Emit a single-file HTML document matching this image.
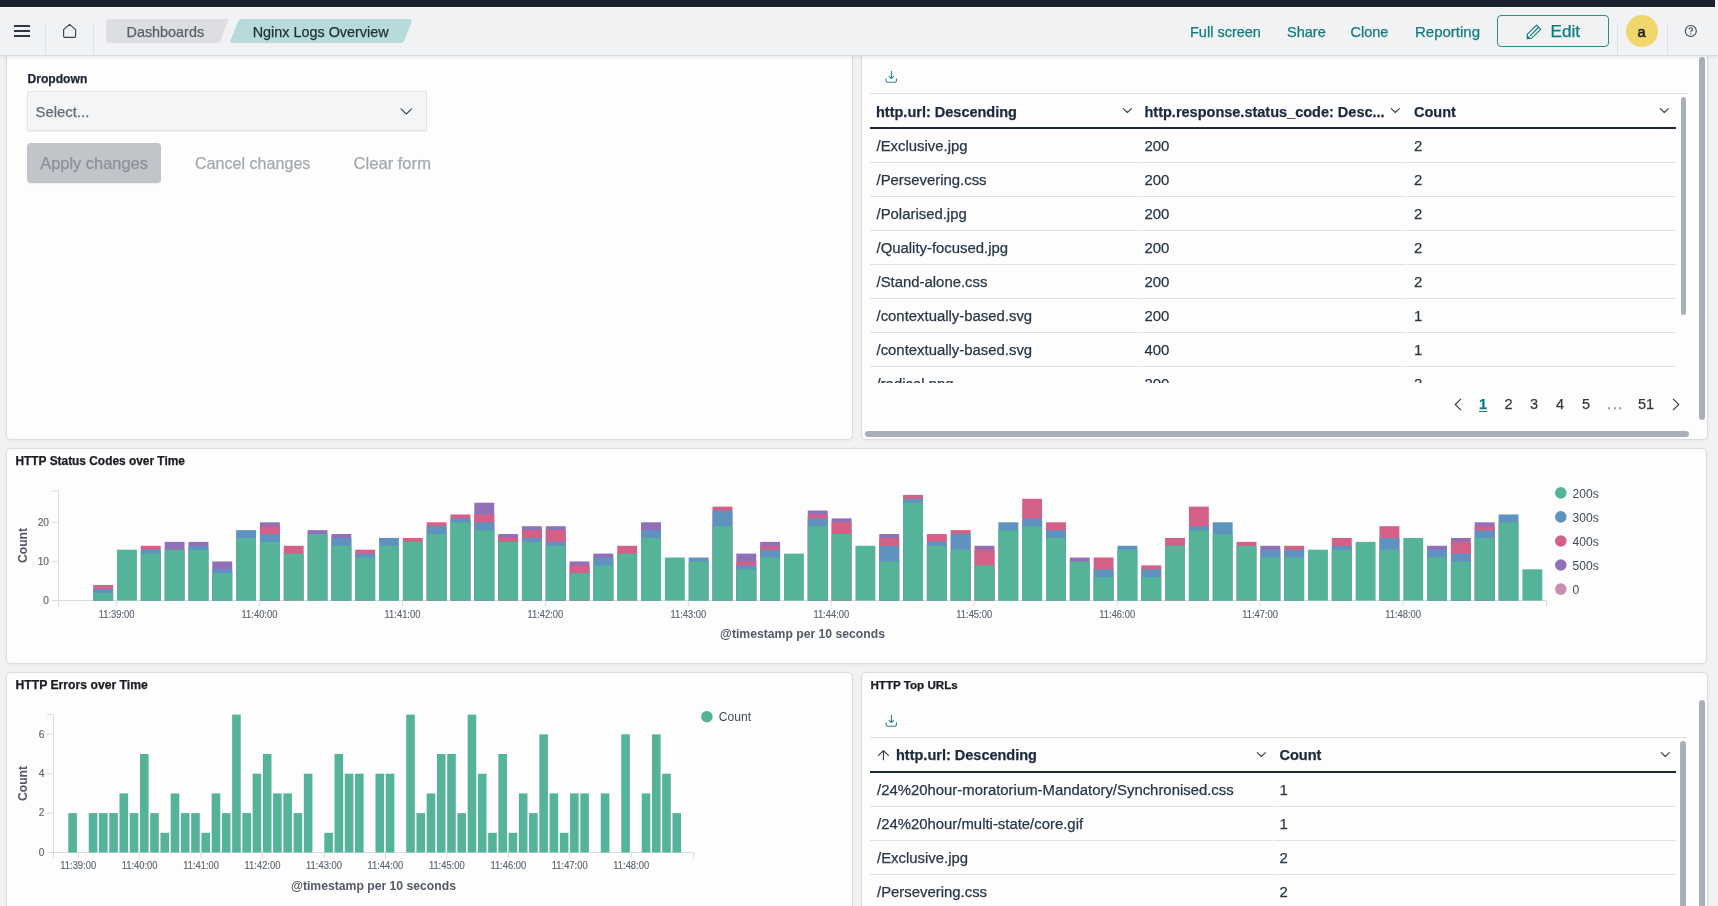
<!DOCTYPE html>
<html><head><meta charset="utf-8"><style>
html,body{-webkit-text-stroke:0.25px currentColor;margin:0;padding:0;will-change:transform;width:1718px;height:906px;overflow:hidden;background:#F1F2F4;font-family:"Liberation Sans", sans-serif;color:#343741}
.abs{position:absolute}
.panel{position:absolute;box-sizing:border-box;background:#FDFDFE;border:1px solid #DADDE2;border-radius:5px;box-shadow:0 1px 3px rgba(0,0,0,0.06)}
.hdr{position:absolute;left:0;top:7px;width:1718px;height:49px;box-sizing:border-box;background:#F1F2F4;border-bottom:1px solid #D8DBDF;box-shadow:inset 0 1px 0 #F8F9FA,0 1px 4px rgba(0,0,0,0.09);z-index:5}
.top{position:absolute;left:0;top:0;width:1714.5px;height:7px;background:#1B2331;z-index:6}
.sep{position:absolute;top:23px;width:1px;height:32px;background:#DCDFE3}
.menu{position:absolute;top:22px;font-size:14.5px;color:#0F7C7C;white-space:nowrap;line-height:18px}
.bc{position:absolute;top:19px;height:24px;line-height:24px;font-size:14.4px;white-space:nowrap}
.th{position:absolute;font-size:14.5px;font-weight:700;color:#1D2A3E;white-space:nowrap;line-height:20px}
.td{position:absolute;font-size:14.9px;color:#2A3746;white-space:nowrap;line-height:20px}
.chev{position:absolute;line-height:0}
.hline{position:absolute;height:1px;background:#DDE1E6}
.rl{position:absolute;left:0;width:806px;height:1px;background:#DDE1E6}
.sb{position:absolute;background:#A9AFB8;border-radius:3px}
.pgn{position:absolute;top:394.5px;font-size:14.5px;line-height:18px;color:#343741}
.ptitle{position:absolute;font-size:11.9px;font-weight:700;color:#1A1C21;white-space:nowrap;line-height:16px}
svg text{font-family:"Liberation Sans", sans-serif;-webkit-text-stroke:0}
.tk{font-size:10.2px;fill:#5C6573;stroke:#5C6573;stroke-width:0.15px}
.at{font-size:12.2px;font-weight:700;fill:#535966}
.lg{font-size:12.1px;fill:#3F4A59}
</style></head><body>
<div class="top"></div>
<div class="hdr">
  <svg style="position:absolute;left:14px;top:18px" width="17" height="13" viewBox="0 0 17 13"><path d="M0 1 H16 M0 6 H16 M0 11 H16" stroke="#343741" stroke-width="1.9"/></svg>
  <div class="sep" style="left:45px;top:16px"></div>
  <svg style="position:absolute;left:62px;top:16px" width="16" height="16" viewBox="0 0 16 16"><path d="M1.6 13.3 V6.6 L7.6 1.4 L13.6 6.6 V13.3 Q13.6 14.3 12.6 14.3 H2.6 Q1.6 14.3 1.6 13.3 Z" fill="none" stroke="#3A4351" stroke-width="1.15" stroke-linejoin="round"/></svg>
  <div class="sep" style="left:93px;top:16px"></div>
  <svg style="position:absolute;left:105px;top:12px" width="310" height="24" viewBox="0 0 310 24">
    <path d="M5 0 H122 Q124 0 123 2 L115.5 21.5 Q114.5 24 112 24 H5 Q1 24 1 20 V4 Q1 0 5 0Z" fill="#DCDEE2"/>
    <path d="M134 0 H304 Q307.5 0 306.5 3 L299.5 21 Q298.5 24 295.5 24 H127 Q124.5 24 125.5 21.5 L133 2.5 Q134 0 136 0Z" fill="#B6DBDA"/>
  </svg>
  <div class="bc" style="left:126.5px;top:13px;color:#5A616B">Dashboards</div>
  <div class="bc" style="left:252.7px;top:13px;color:#23303F">Nginx Logs Overview</div>
  <div class="menu" style="left:1190px;top:15.5px">Full screen</div>
  <div class="menu" style="left:1287px;top:15.5px">Share</div>
  <div class="menu" style="left:1350.5px;top:15.5px">Clone</div>
  <div class="menu" style="left:1415px;top:15.5px;font-size:15px">Reporting</div>
  <div style="position:absolute;left:1497px;top:8px;width:110px;height:30px;border:1px solid #2A8C8A;border-radius:4px"></div>
  <svg style="position:absolute;left:1526px;top:16.6px" width="17" height="17" viewBox="0 0 17 17"><path d="M5.6 14.2 L1.3 14.6 L1.2 10.3 L10.6 1.1 L14.8 5.3 Z M4.4 11.6 L12.4 3.5" fill="none" stroke="#0F7C7C" stroke-width="1.15" stroke-linejoin="round" stroke-linecap="round"/><path d="M1.2 11.2 L1.3 14.6 L4.6 14.3Z" fill="#0F7C7C"/></svg>
  <div class="menu" style="left:1550.5px;top:13px;font-size:17.2px;line-height:22px">Edit</div>
  <div class="sep" style="left:1617px;top:16px"></div>
  <div style="position:absolute;left:1625.5px;top:8px;width:32px;height:32px;border-radius:16px;background:#F0D66B;text-align:center;line-height:34px;font-size:14.5px;-webkit-text-stroke:0.55px #1A1C21;color:#1A1C21">a</div>
  <div class="sep" style="left:1667px;top:16px"></div>
  <svg style="position:absolute;left:1684px;top:17px" width="14" height="14" viewBox="0 0 14 14"><circle cx="6.8" cy="7" r="5.5" fill="none" stroke="#3A4452" stroke-width="1.1"/><path d="M5.1 5.5 Q5.1 3.8 6.8 3.8 Q8.6 3.8 8.6 5.3 Q8.6 6.3 7.5 6.8 Q6.8 7.1 6.8 8.2" fill="none" stroke="#3A4452" stroke-width="1.05"/><circle cx="6.8" cy="9.9" r="0.65" fill="#3A4452"/></svg>
</div>

<!-- Panel A -->
<div class="panel" style="left:6px;top:20px;width:847px;height:420px"></div>
<div class="abs" style="left:27.5px;top:71.3px;font-size:12.1px;font-weight:700;color:#1D2433;line-height:16px">Dropdown</div>
<div class="abs" style="left:27px;top:91px;width:398px;height:38px;background:#F4F5F7;border:1px solid #E1E4E8;border-radius:1px;box-shadow:0 1px 1px rgba(0,0,0,0.05)"></div>
<div class="abs" style="left:35.5px;top:101.7px;font-size:14.9px;color:#646B76;line-height:20px">Select...</div>
<svg style="position:absolute;left:400px;top:107.5px" width="13" height="8" viewBox="0 0 13 8"><path d="M1 0.8 L6.3 6 L11.6 0.8" fill="none" stroke="#3A4452" stroke-width="1.1" stroke-linecap="round" stroke-linejoin="round"/></svg>
<div class="abs" style="left:27px;top:143px;width:134px;height:40px;background:#C1C4C9;border-radius:4px;box-shadow:0 1px 1px rgba(0,0,0,0.05)"></div>
<div class="abs" style="left:40.3px;top:152px;font-size:16.4px;color:#8B9199;line-height:22px">Apply changes</div>
<div class="abs" style="left:195px;top:152px;font-size:16.1px;color:#A3A9B1;line-height:22px">Cancel changes</div>
<div class="abs" style="left:353.5px;top:152.5px;font-size:16.6px;color:#A3A9B1;line-height:22px">Clear form</div>

<!-- Panel B -->
<div class="panel" style="left:861px;top:20px;width:847px;height:420px"></div>
<div class="hline" style="left:870px;top:93px;width:818px"></div>
<div class="th" style="left:876px;top:101.5px">http.url: Descending</div>
<div class="chev" style="left:1121.5px;top:108px"><svg width="11" height="6" viewBox="0 0 11 6"><path d="M1.3 0.6 L5.3 4.5 L9.4 0.6" fill="none" stroke="#3A4452" stroke-width="1.15" stroke-linecap="round" stroke-linejoin="round"/></svg></div>
<div class="th" style="left:1144.5px;top:101.5px">http.response.status_code: Desc...</div>
<div class="chev" style="left:1390px;top:108px"><svg width="11" height="6" viewBox="0 0 11 6"><path d="M1.3 0.6 L5.3 4.5 L9.4 0.6" fill="none" stroke="#3A4452" stroke-width="1.15" stroke-linecap="round" stroke-linejoin="round"/></svg></div>
<div class="th" style="left:1414px;top:101.5px">Count</div>
<div class="chev" style="left:1659px;top:108px"><svg width="11" height="6" viewBox="0 0 11 6"><path d="M1.3 0.6 L5.3 4.5 L9.4 0.6" fill="none" stroke="#3A4452" stroke-width="1.15" stroke-linecap="round" stroke-linejoin="round"/></svg></div>
<div style="position:absolute;left:870px;top:127px;width:806px;height:2px;background:#1D2A3E"></div>
<div style="position:absolute;left:870px;top:129px;width:806px;height:254px;overflow:hidden">
<div class="td" style="left:6.5px;top:7.3px">/Exclusive.jpg</div><div class="td" style="left:274.5px;top:7.3px">200</div><div class="td" style="left:544px;top:7.3px">2</div>
<div class="rl" style="top:33px"></div>
<div class="td" style="left:6.5px;top:41.3px">/Persevering.css</div><div class="td" style="left:274.5px;top:41.3px">200</div><div class="td" style="left:544px;top:41.3px">2</div>
<div class="rl" style="top:67px"></div>
<div class="td" style="left:6.5px;top:75.3px">/Polarised.jpg</div><div class="td" style="left:274.5px;top:75.3px">200</div><div class="td" style="left:544px;top:75.3px">2</div>
<div class="rl" style="top:101px"></div>
<div class="td" style="left:6.5px;top:109.3px">/Quality-focused.jpg</div><div class="td" style="left:274.5px;top:109.3px">200</div><div class="td" style="left:544px;top:109.3px">2</div>
<div class="rl" style="top:135px"></div>
<div class="td" style="left:6.5px;top:143.3px">/Stand-alone.css</div><div class="td" style="left:274.5px;top:143.3px">200</div><div class="td" style="left:544px;top:143.3px">2</div>
<div class="rl" style="top:169px"></div>
<div class="td" style="left:6.5px;top:177.3px">/contextually-based.svg</div><div class="td" style="left:274.5px;top:177.3px">200</div><div class="td" style="left:544px;top:177.3px">1</div>
<div class="rl" style="top:203px"></div>
<div class="td" style="left:6.5px;top:211.3px">/contextually-based.svg</div><div class="td" style="left:274.5px;top:211.3px">400</div><div class="td" style="left:544px;top:211.3px">1</div>
<div class="rl" style="top:237px"></div>
<div class="td" style="left:6.5px;top:245.3px">/radical.png</div><div class="td" style="left:274.5px;top:245.3px">200</div><div class="td" style="left:544px;top:245.3px">2</div>
<div class="rl" style="top:271px"></div>
<div style="position:absolute;left:268px;top:0;width:1px;height:254px;background:#FDFDFE"></div><div style="position:absolute;left:537px;top:0;width:1px;height:254px;background:#FDFDFE"></div>
</div>
<div style="position:absolute;left:1454px;top:397px"><svg width="8" height="13" viewBox="0 0 8 13"><path d="M7 0.8 L1.2 6.5 L7 12.2" fill="none" stroke="#343741" stroke-width="1.1"/></svg></div>
<div class="pgn" style="left:1479px;color:#0F7C7C;font-weight:700;text-decoration:underline;text-underline-offset:2px">1</div>
<div class="pgn" style="left:1504.5px">2</div>
<div class="pgn" style="left:1530px">3</div>
<div class="pgn" style="left:1556px">4</div>
<div class="pgn" style="left:1582px">5</div>
<div class="pgn" style="left:1638px">51</div>
<div class="pgn" style="left:1607px;color:#7D848F;letter-spacing:1.6px">...</div>
<div style="position:absolute;left:1672px;top:397px"><svg width="8" height="13" viewBox="0 0 8 13"><path d="M1 0.8 L6.8 6.5 L1 12.2" fill="none" stroke="#343741" stroke-width="1.1"/></svg></div>
<div class="sb" style="left:865px;top:431px;width:823.5px;height:6px"></div>
<div class="sb" style="left:1680.5px;top:97px;width:5.5px;height:218px"></div>
<div class="sb" style="left:1699px;top:57px;width:6px;height:363px"></div>
<div style="position:absolute;left:885px;top:69px"><svg width="13" height="13" viewBox="0 0 13 13"><path d="M6.4 1.2 V8.4 M4.1 6.4 L6.4 8.5 L8.6 6.4 M1.1 8.9 V10.5 Q1.1 12.2 2.8 12.2 H9.8 Q11.5 12.2 11.5 10.5 V8.9" fill="none" stroke="#2A8987" stroke-width="1.1" stroke-linecap="round" stroke-linejoin="round"/></svg></div>

<!-- Panel C -->
<div class="panel" style="left:6px;top:448px;width:1701px;height:216px"></div>
<div class="ptitle" style="left:15.5px;top:453px">HTTP Status Codes over Time</div>

<!-- Panel D -->
<div class="panel" style="left:6px;top:672px;width:847px;height:260px"></div>
<div class="ptitle" style="left:15.5px;top:677px;font-size:12.2px">HTTP Errors over Time</div>

<!-- Panel E -->
<div class="panel" style="left:861px;top:672px;width:847px;height:260px"></div>
<div class="ptitle" style="left:870.5px;top:677px;font-size:11.6px">HTTP Top URLs</div>
<div style="position:absolute;left:885px;top:713px"><svg width="13" height="13" viewBox="0 0 13 13"><path d="M6.4 1.2 V8.4 M4.1 6.4 L6.4 8.5 L8.6 6.4 M1.1 8.9 V10.5 Q1.1 12.2 2.8 12.2 H9.8 Q11.5 12.2 11.5 10.5 V8.9" fill="none" stroke="#2A8987" stroke-width="1.1" stroke-linecap="round" stroke-linejoin="round"/></svg></div>
<div class="hline" style="left:870px;top:737px;width:817px"></div>
<div style="position:absolute;left:878px;top:747px"><svg width="11" height="13" viewBox="0 0 11 13"><path d="M5.45 11.7 V3 M0.6 7.4 L5.45 2.7 L10.4 7.4" fill="none" stroke="#2F3A48" stroke-width="1.15" stroke-linecap="round" stroke-linejoin="round"/></svg></div>
<div class="th" style="left:896px;top:745px">http.url: Descending</div>
<div class="chev" style="left:1256px;top:752px"><svg width="11" height="6" viewBox="0 0 11 6"><path d="M1.3 0.6 L5.3 4.5 L9.4 0.6" fill="none" stroke="#3A4452" stroke-width="1.15" stroke-linecap="round" stroke-linejoin="round"/></svg></div>
<div class="th" style="left:1279.5px;top:745px">Count</div>
<div class="chev" style="left:1659.5px;top:752px"><svg width="11" height="6" viewBox="0 0 11 6"><path d="M1.3 0.6 L5.3 4.5 L9.4 0.6" fill="none" stroke="#3A4452" stroke-width="1.15" stroke-linecap="round" stroke-linejoin="round"/></svg></div>
<div style="position:absolute;left:870px;top:770.5px;width:806px;height:2px;background:#1D2A3E"></div>
<div class="td" style="left:877px;top:779.5px">/24%20hour-moratorium-Mandatory/Synchronised.css</div><div class="td" style="left:1279.5px;top:779.5px">1</div>
<div class="hline" style="left:870px;top:806.0px;width:806px"></div>
<div class="td" style="left:877px;top:813.5px">/24%20hour/multi-state/core.gif</div><div class="td" style="left:1279.5px;top:813.5px">1</div>
<div class="hline" style="left:870px;top:840.0px;width:806px"></div>
<div class="td" style="left:877px;top:847.5px">/Exclusive.jpg</div><div class="td" style="left:1279.5px;top:847.5px">2</div>
<div class="hline" style="left:870px;top:874.0px;width:806px"></div>
<div class="td" style="left:877px;top:881.5px">/Persevering.css</div><div class="td" style="left:1279.5px;top:881.5px">2</div>
<div class="hline" style="left:870px;top:908.0px;width:806px"></div>
<div class="td" style="left:877px;top:915.5px">/Polarised.jpg</div><div class="td" style="left:1279.5px;top:915.5px">2</div>
<div class="hline" style="left:870px;top:942.0px;width:806px"></div>
<div style="position:absolute;left:1272px;top:773px;width:1px;height:140px;background:#FDFDFE"></div>
<div class="sb" style="left:1680px;top:741px;width:6px;height:200px"></div>
<div class="sb" style="left:1699px;top:700px;width:5.5px;height:220px"></div>

<svg style="position:absolute;left:0;top:0" width="1718" height="906">
<rect x="58" y="490.5" width="1" height="116" fill="#D9DCE1"/>
<rect x="52" y="600" width="1495" height="1" fill="#D9DCE1"/>
<rect x="52" y="600.1" width="6" height="1" fill="#D9DCE1"/>
<text x="49" y="603.9" text-anchor="end" class="tk">0</text>
<rect x="52" y="561.0" width="6" height="1" fill="#D9DCE1"/>
<text x="49" y="564.8" text-anchor="end" class="tk">10</text>
<rect x="52" y="521.8" width="6" height="1" fill="#D9DCE1"/>
<text x="49" y="525.6" text-anchor="end" class="tk">20</text>
<rect x="52" y="490.5" width="6" height="1" fill="#D9DCE1"/>
<rect x="116.1" y="600" width="1" height="6.5" fill="#D9DCE1"/>
<text x="98.7" y="617.5" class="tk" textLength="35.8" lengthAdjust="spacingAndGlyphs">11:39:00</text>
<rect x="259.0" y="600" width="1" height="6.5" fill="#D9DCE1"/>
<text x="241.6" y="617.5" class="tk" textLength="35.8" lengthAdjust="spacingAndGlyphs">11:40:00</text>
<rect x="402.0" y="600" width="1" height="6.5" fill="#D9DCE1"/>
<text x="384.6" y="617.5" class="tk" textLength="35.8" lengthAdjust="spacingAndGlyphs">11:41:00</text>
<rect x="544.9" y="600" width="1" height="6.5" fill="#D9DCE1"/>
<text x="527.5" y="617.5" class="tk" textLength="35.8" lengthAdjust="spacingAndGlyphs">11:42:00</text>
<rect x="687.9" y="600" width="1" height="6.5" fill="#D9DCE1"/>
<text x="670.5" y="617.5" class="tk" textLength="35.8" lengthAdjust="spacingAndGlyphs">11:43:00</text>
<rect x="830.8" y="600" width="1" height="6.5" fill="#D9DCE1"/>
<text x="813.4" y="617.5" class="tk" textLength="35.8" lengthAdjust="spacingAndGlyphs">11:44:00</text>
<rect x="973.7" y="600" width="1" height="6.5" fill="#D9DCE1"/>
<text x="956.3" y="617.5" class="tk" textLength="35.8" lengthAdjust="spacingAndGlyphs">11:45:00</text>
<rect x="1116.7" y="600" width="1" height="6.5" fill="#D9DCE1"/>
<text x="1099.3" y="617.5" class="tk" textLength="35.8" lengthAdjust="spacingAndGlyphs">11:46:00</text>
<rect x="1259.6" y="600" width="1" height="6.5" fill="#D9DCE1"/>
<text x="1242.2" y="617.5" class="tk" textLength="35.8" lengthAdjust="spacingAndGlyphs">11:47:00</text>
<rect x="1402.6" y="600" width="1" height="6.5" fill="#D9DCE1"/>
<text x="1385.2" y="617.5" class="tk" textLength="35.8" lengthAdjust="spacingAndGlyphs">11:48:00</text>
<rect x="1546" y="600" width="1" height="6.5" fill="#D9DCE1"/>
<text transform="translate(26.5,545.5) rotate(-90)" text-anchor="middle" class="at">Count</text>
<text x="802.5" y="637.7" text-anchor="middle" class="at">@timestamp per 10 seconds</text>
<circle cx="1560.8" cy="492.9" r="5.8" fill="#54B399"/>
<text x="1572.5" y="497.7" class="lg">200s</text>
<circle cx="1560.8" cy="516.9" r="5.8" fill="#6092C0"/>
<text x="1572.5" y="521.7" class="lg">300s</text>
<circle cx="1560.8" cy="541.0" r="5.8" fill="#D36086"/>
<text x="1572.5" y="545.8" class="lg">400s</text>
<circle cx="1560.8" cy="565.0" r="5.8" fill="#9170B8"/>
<text x="1572.5" y="569.8" class="lg">500s</text>
<circle cx="1560.8" cy="589.1" r="5.8" fill="#CA8EAE"/>
<text x="1572.5" y="593.9" class="lg">0</text>
<rect x="93.20" y="584.94" width="19.9" height="15.66" fill="#D36086"/>
<rect x="93.20" y="588.86" width="19.9" height="11.75" fill="#6092C0"/>
<rect x="93.20" y="592.77" width="19.9" height="7.83" fill="#54B399"/>
<rect x="117.02" y="549.71" width="19.9" height="50.90" fill="#54B399"/>
<rect x="140.84" y="545.79" width="19.9" height="54.81" fill="#D36086"/>
<rect x="140.84" y="549.71" width="19.9" height="50.90" fill="#6092C0"/>
<rect x="140.84" y="553.62" width="19.9" height="46.98" fill="#54B399"/>
<rect x="164.66" y="541.88" width="19.9" height="58.73" fill="#9170B8"/>
<rect x="164.66" y="549.71" width="19.9" height="50.90" fill="#54B399"/>
<rect x="188.48" y="541.88" width="19.9" height="58.73" fill="#9170B8"/>
<rect x="188.48" y="545.79" width="19.9" height="54.81" fill="#6092C0"/>
<rect x="188.48" y="549.71" width="19.9" height="50.90" fill="#54B399"/>
<rect x="212.30" y="561.45" width="19.9" height="39.15" fill="#9170B8"/>
<rect x="212.30" y="569.28" width="19.9" height="31.32" fill="#6092C0"/>
<rect x="212.30" y="573.20" width="19.9" height="27.41" fill="#54B399"/>
<rect x="236.12" y="530.13" width="19.9" height="70.47" fill="#6092C0"/>
<rect x="236.12" y="537.96" width="19.9" height="62.64" fill="#54B399"/>
<rect x="259.94" y="522.30" width="19.9" height="78.30" fill="#9170B8"/>
<rect x="259.94" y="526.22" width="19.9" height="74.39" fill="#D36086"/>
<rect x="259.94" y="534.05" width="19.9" height="66.56" fill="#6092C0"/>
<rect x="259.94" y="541.88" width="19.9" height="58.73" fill="#54B399"/>
<rect x="283.76" y="545.79" width="19.9" height="54.81" fill="#D36086"/>
<rect x="283.76" y="553.62" width="19.9" height="46.98" fill="#54B399"/>
<rect x="307.58" y="530.13" width="19.9" height="70.47" fill="#9170B8"/>
<rect x="307.58" y="534.05" width="19.9" height="66.56" fill="#54B399"/>
<rect x="331.40" y="534.05" width="19.9" height="66.56" fill="#9170B8"/>
<rect x="331.40" y="537.96" width="19.9" height="62.64" fill="#6092C0"/>
<rect x="331.40" y="545.79" width="19.9" height="54.81" fill="#54B399"/>
<rect x="355.22" y="549.71" width="19.9" height="50.90" fill="#D36086"/>
<rect x="355.22" y="553.62" width="19.9" height="46.98" fill="#6092C0"/>
<rect x="355.22" y="557.54" width="19.9" height="43.06" fill="#54B399"/>
<rect x="379.04" y="537.96" width="19.9" height="62.64" fill="#6092C0"/>
<rect x="379.04" y="545.79" width="19.9" height="54.81" fill="#54B399"/>
<rect x="402.86" y="537.96" width="19.9" height="62.64" fill="#D36086"/>
<rect x="402.86" y="541.88" width="19.9" height="58.73" fill="#54B399"/>
<rect x="426.68" y="522.30" width="19.9" height="78.30" fill="#D36086"/>
<rect x="426.68" y="526.22" width="19.9" height="74.39" fill="#6092C0"/>
<rect x="426.68" y="534.05" width="19.9" height="66.56" fill="#54B399"/>
<rect x="450.50" y="514.47" width="19.9" height="86.13" fill="#D36086"/>
<rect x="450.50" y="518.38" width="19.9" height="82.22" fill="#6092C0"/>
<rect x="450.50" y="522.30" width="19.9" height="78.30" fill="#54B399"/>
<rect x="474.32" y="502.73" width="19.9" height="97.88" fill="#9170B8"/>
<rect x="474.32" y="514.47" width="19.9" height="86.13" fill="#D36086"/>
<rect x="474.32" y="522.30" width="19.9" height="78.30" fill="#6092C0"/>
<rect x="474.32" y="530.13" width="19.9" height="70.47" fill="#54B399"/>
<rect x="498.14" y="534.05" width="19.9" height="66.56" fill="#9170B8"/>
<rect x="498.14" y="537.96" width="19.9" height="62.64" fill="#D36086"/>
<rect x="498.14" y="541.88" width="19.9" height="58.73" fill="#54B399"/>
<rect x="521.96" y="526.22" width="19.9" height="74.39" fill="#9170B8"/>
<rect x="521.96" y="530.13" width="19.9" height="70.47" fill="#D36086"/>
<rect x="521.96" y="537.96" width="19.9" height="62.64" fill="#6092C0"/>
<rect x="521.96" y="541.88" width="19.9" height="58.73" fill="#54B399"/>
<rect x="545.78" y="526.22" width="19.9" height="74.39" fill="#9170B8"/>
<rect x="545.78" y="530.13" width="19.9" height="70.47" fill="#D36086"/>
<rect x="545.78" y="541.88" width="19.9" height="58.73" fill="#6092C0"/>
<rect x="545.78" y="545.79" width="19.9" height="54.81" fill="#54B399"/>
<rect x="569.60" y="561.45" width="19.9" height="39.15" fill="#9170B8"/>
<rect x="569.60" y="565.37" width="19.9" height="35.23" fill="#D36086"/>
<rect x="569.60" y="573.20" width="19.9" height="27.41" fill="#54B399"/>
<rect x="593.42" y="553.62" width="19.9" height="46.98" fill="#9170B8"/>
<rect x="593.42" y="557.54" width="19.9" height="43.06" fill="#6092C0"/>
<rect x="593.42" y="565.37" width="19.9" height="35.23" fill="#54B399"/>
<rect x="617.24" y="545.79" width="19.9" height="54.81" fill="#D36086"/>
<rect x="617.24" y="553.62" width="19.9" height="46.98" fill="#54B399"/>
<rect x="641.06" y="522.30" width="19.9" height="78.30" fill="#9170B8"/>
<rect x="641.06" y="530.13" width="19.9" height="70.47" fill="#6092C0"/>
<rect x="641.06" y="537.96" width="19.9" height="62.64" fill="#54B399"/>
<rect x="664.88" y="557.54" width="19.9" height="43.06" fill="#54B399"/>
<rect x="688.70" y="557.54" width="19.9" height="43.06" fill="#6092C0"/>
<rect x="688.70" y="561.45" width="19.9" height="39.15" fill="#54B399"/>
<rect x="712.52" y="506.64" width="19.9" height="93.96" fill="#D36086"/>
<rect x="712.52" y="510.56" width="19.9" height="90.05" fill="#6092C0"/>
<rect x="712.52" y="526.22" width="19.9" height="74.39" fill="#54B399"/>
<rect x="736.34" y="553.62" width="19.9" height="46.98" fill="#9170B8"/>
<rect x="736.34" y="561.45" width="19.9" height="39.15" fill="#D36086"/>
<rect x="736.34" y="565.37" width="19.9" height="35.23" fill="#6092C0"/>
<rect x="736.34" y="569.28" width="19.9" height="31.32" fill="#54B399"/>
<rect x="760.16" y="541.88" width="19.9" height="58.73" fill="#9170B8"/>
<rect x="760.16" y="545.79" width="19.9" height="54.81" fill="#D36086"/>
<rect x="760.16" y="549.71" width="19.9" height="50.90" fill="#6092C0"/>
<rect x="760.16" y="557.54" width="19.9" height="43.06" fill="#54B399"/>
<rect x="783.98" y="553.62" width="19.9" height="46.98" fill="#54B399"/>
<rect x="807.80" y="510.56" width="19.9" height="90.05" fill="#9170B8"/>
<rect x="807.80" y="514.47" width="19.9" height="86.13" fill="#D36086"/>
<rect x="807.80" y="518.38" width="19.9" height="82.22" fill="#6092C0"/>
<rect x="807.80" y="526.22" width="19.9" height="74.39" fill="#54B399"/>
<rect x="831.62" y="518.38" width="19.9" height="82.22" fill="#9170B8"/>
<rect x="831.62" y="522.30" width="19.9" height="78.30" fill="#D36086"/>
<rect x="831.62" y="534.05" width="19.9" height="66.56" fill="#54B399"/>
<rect x="855.44" y="545.79" width="19.9" height="54.81" fill="#54B399"/>
<rect x="879.26" y="534.05" width="19.9" height="66.56" fill="#9170B8"/>
<rect x="879.26" y="537.96" width="19.9" height="62.64" fill="#D36086"/>
<rect x="879.26" y="545.79" width="19.9" height="54.81" fill="#6092C0"/>
<rect x="879.26" y="561.45" width="19.9" height="39.15" fill="#54B399"/>
<rect x="903.08" y="494.90" width="19.9" height="105.70" fill="#D36086"/>
<rect x="903.08" y="498.81" width="19.9" height="101.79" fill="#6092C0"/>
<rect x="903.08" y="502.73" width="19.9" height="97.88" fill="#54B399"/>
<rect x="926.90" y="534.05" width="19.9" height="66.56" fill="#D36086"/>
<rect x="926.90" y="541.88" width="19.9" height="58.73" fill="#6092C0"/>
<rect x="926.90" y="545.79" width="19.9" height="54.81" fill="#54B399"/>
<rect x="950.72" y="530.13" width="19.9" height="70.47" fill="#D36086"/>
<rect x="950.72" y="534.05" width="19.9" height="66.56" fill="#6092C0"/>
<rect x="950.72" y="549.71" width="19.9" height="50.90" fill="#54B399"/>
<rect x="974.54" y="545.79" width="19.9" height="54.81" fill="#9170B8"/>
<rect x="974.54" y="549.71" width="19.9" height="50.90" fill="#D36086"/>
<rect x="974.54" y="565.37" width="19.9" height="35.23" fill="#54B399"/>
<rect x="998.36" y="522.30" width="19.9" height="78.30" fill="#6092C0"/>
<rect x="998.36" y="530.13" width="19.9" height="70.47" fill="#54B399"/>
<rect x="1022.18" y="498.81" width="19.9" height="101.79" fill="#D36086"/>
<rect x="1022.18" y="518.38" width="19.9" height="82.22" fill="#6092C0"/>
<rect x="1022.18" y="526.22" width="19.9" height="74.39" fill="#54B399"/>
<rect x="1046.00" y="522.30" width="19.9" height="78.30" fill="#D36086"/>
<rect x="1046.00" y="530.13" width="19.9" height="70.47" fill="#6092C0"/>
<rect x="1046.00" y="537.96" width="19.9" height="62.64" fill="#54B399"/>
<rect x="1069.82" y="557.54" width="19.9" height="43.06" fill="#9170B8"/>
<rect x="1069.82" y="561.45" width="19.9" height="39.15" fill="#54B399"/>
<rect x="1093.64" y="557.54" width="19.9" height="43.06" fill="#D36086"/>
<rect x="1093.64" y="569.28" width="19.9" height="31.32" fill="#6092C0"/>
<rect x="1093.64" y="577.11" width="19.9" height="23.49" fill="#54B399"/>
<rect x="1117.46" y="545.79" width="19.9" height="54.81" fill="#6092C0"/>
<rect x="1117.46" y="549.71" width="19.9" height="50.90" fill="#54B399"/>
<rect x="1141.28" y="565.37" width="19.9" height="35.23" fill="#D36086"/>
<rect x="1141.28" y="569.28" width="19.9" height="31.32" fill="#6092C0"/>
<rect x="1141.28" y="577.11" width="19.9" height="23.49" fill="#54B399"/>
<rect x="1165.10" y="537.96" width="19.9" height="62.64" fill="#D36086"/>
<rect x="1165.10" y="545.79" width="19.9" height="54.81" fill="#54B399"/>
<rect x="1188.92" y="506.64" width="19.9" height="93.96" fill="#D36086"/>
<rect x="1188.92" y="526.22" width="19.9" height="74.39" fill="#6092C0"/>
<rect x="1188.92" y="530.13" width="19.9" height="70.47" fill="#54B399"/>
<rect x="1212.74" y="522.30" width="19.9" height="78.30" fill="#6092C0"/>
<rect x="1212.74" y="534.05" width="19.9" height="66.56" fill="#54B399"/>
<rect x="1236.56" y="541.88" width="19.9" height="58.73" fill="#D36086"/>
<rect x="1236.56" y="545.79" width="19.9" height="54.81" fill="#54B399"/>
<rect x="1260.38" y="545.79" width="19.9" height="54.81" fill="#9170B8"/>
<rect x="1260.38" y="549.71" width="19.9" height="50.90" fill="#6092C0"/>
<rect x="1260.38" y="557.54" width="19.9" height="43.06" fill="#54B399"/>
<rect x="1284.20" y="545.79" width="19.9" height="54.81" fill="#D36086"/>
<rect x="1284.20" y="549.71" width="19.9" height="50.90" fill="#6092C0"/>
<rect x="1284.20" y="557.54" width="19.9" height="43.06" fill="#54B399"/>
<rect x="1308.02" y="549.71" width="19.9" height="50.90" fill="#54B399"/>
<rect x="1331.84" y="537.96" width="19.9" height="62.64" fill="#D36086"/>
<rect x="1331.84" y="545.79" width="19.9" height="54.81" fill="#6092C0"/>
<rect x="1331.84" y="549.71" width="19.9" height="50.90" fill="#54B399"/>
<rect x="1355.66" y="541.88" width="19.9" height="58.73" fill="#54B399"/>
<rect x="1379.48" y="526.22" width="19.9" height="74.39" fill="#D36086"/>
<rect x="1379.48" y="537.96" width="19.9" height="62.64" fill="#6092C0"/>
<rect x="1379.48" y="549.71" width="19.9" height="50.90" fill="#54B399"/>
<rect x="1403.30" y="537.96" width="19.9" height="62.64" fill="#54B399"/>
<rect x="1427.12" y="545.79" width="19.9" height="54.81" fill="#9170B8"/>
<rect x="1427.12" y="549.71" width="19.9" height="50.90" fill="#6092C0"/>
<rect x="1427.12" y="557.54" width="19.9" height="43.06" fill="#54B399"/>
<rect x="1450.94" y="537.96" width="19.9" height="62.64" fill="#9170B8"/>
<rect x="1450.94" y="541.88" width="19.9" height="58.73" fill="#D36086"/>
<rect x="1450.94" y="553.62" width="19.9" height="46.98" fill="#6092C0"/>
<rect x="1450.94" y="561.45" width="19.9" height="39.15" fill="#54B399"/>
<rect x="1474.76" y="522.30" width="19.9" height="78.30" fill="#9170B8"/>
<rect x="1474.76" y="526.22" width="19.9" height="74.39" fill="#D36086"/>
<rect x="1474.76" y="530.13" width="19.9" height="70.47" fill="#6092C0"/>
<rect x="1474.76" y="537.96" width="19.9" height="62.64" fill="#54B399"/>
<rect x="1498.58" y="514.47" width="19.9" height="86.13" fill="#6092C0"/>
<rect x="1498.58" y="522.30" width="19.9" height="78.30" fill="#54B399"/>
<rect x="1522.40" y="569.28" width="19.9" height="31.32" fill="#54B399"/>
<rect x="53" y="714.3" width="1" height="144" fill="#D9DCE1"/>
<rect x="47" y="852" width="647" height="1" fill="#D9DCE1"/>
<rect x="47" y="852.0" width="6" height="1" fill="#D9DCE1"/>
<text x="44.5" y="855.8" text-anchor="end" class="tk">0</text>
<rect x="47" y="812.6" width="6" height="1" fill="#D9DCE1"/>
<text x="44.5" y="816.4" text-anchor="end" class="tk">2</text>
<rect x="47" y="773.2" width="6" height="1" fill="#D9DCE1"/>
<text x="44.5" y="777.0" text-anchor="end" class="tk">4</text>
<rect x="47" y="733.8" width="6" height="1" fill="#D9DCE1"/>
<text x="44.5" y="737.6" text-anchor="end" class="tk">6</text>
<rect x="47" y="714.1" width="6" height="1" fill="#D9DCE1"/>
<rect x="77.7" y="852" width="1" height="6.5" fill="#D9DCE1"/>
<text x="60.3" y="868.9" class="tk" textLength="35.8" lengthAdjust="spacingAndGlyphs">11:39:00</text>
<rect x="139.1" y="852" width="1" height="6.5" fill="#D9DCE1"/>
<text x="121.7" y="868.9" class="tk" textLength="35.8" lengthAdjust="spacingAndGlyphs">11:40:00</text>
<rect x="200.6" y="852" width="1" height="6.5" fill="#D9DCE1"/>
<text x="183.2" y="868.9" class="tk" textLength="35.8" lengthAdjust="spacingAndGlyphs">11:41:00</text>
<rect x="262.0" y="852" width="1" height="6.5" fill="#D9DCE1"/>
<text x="244.6" y="868.9" class="tk" textLength="35.8" lengthAdjust="spacingAndGlyphs">11:42:00</text>
<rect x="323.5" y="852" width="1" height="6.5" fill="#D9DCE1"/>
<text x="306.1" y="868.9" class="tk" textLength="35.8" lengthAdjust="spacingAndGlyphs">11:43:00</text>
<rect x="384.9" y="852" width="1" height="6.5" fill="#D9DCE1"/>
<text x="367.5" y="868.9" class="tk" textLength="35.8" lengthAdjust="spacingAndGlyphs">11:44:00</text>
<rect x="446.3" y="852" width="1" height="6.5" fill="#D9DCE1"/>
<text x="428.9" y="868.9" class="tk" textLength="35.8" lengthAdjust="spacingAndGlyphs">11:45:00</text>
<rect x="507.8" y="852" width="1" height="6.5" fill="#D9DCE1"/>
<text x="490.4" y="868.9" class="tk" textLength="35.8" lengthAdjust="spacingAndGlyphs">11:46:00</text>
<rect x="569.2" y="852" width="1" height="6.5" fill="#D9DCE1"/>
<text x="551.8" y="868.9" class="tk" textLength="35.8" lengthAdjust="spacingAndGlyphs">11:47:00</text>
<rect x="630.7" y="852" width="1" height="6.5" fill="#D9DCE1"/>
<text x="613.3" y="868.9" class="tk" textLength="35.8" lengthAdjust="spacingAndGlyphs">11:48:00</text>
<rect x="693" y="852" width="1" height="6.5" fill="#D9DCE1"/>
<text transform="translate(26.5,783.5) rotate(-90)" text-anchor="middle" class="at">Count</text>
<text x="373.5" y="889.5" text-anchor="middle" class="at">@timestamp per 10 seconds</text>
<circle cx="706.9" cy="716.7" r="5.8" fill="#54B399"/>
<text x="718.8" y="721" class="lg">Count</text>
<rect x="68.30" y="813.10" width="8.6" height="39.40" fill="#54B399"/>
<rect x="88.78" y="813.10" width="8.6" height="39.40" fill="#54B399"/>
<rect x="99.02" y="813.10" width="8.6" height="39.40" fill="#54B399"/>
<rect x="109.26" y="813.10" width="8.6" height="39.40" fill="#54B399"/>
<rect x="119.50" y="793.40" width="8.6" height="59.10" fill="#54B399"/>
<rect x="129.74" y="813.10" width="8.6" height="39.40" fill="#54B399"/>
<rect x="139.98" y="754.00" width="8.6" height="98.50" fill="#54B399"/>
<rect x="150.22" y="813.10" width="8.6" height="39.40" fill="#54B399"/>
<rect x="160.46" y="832.80" width="8.6" height="19.70" fill="#54B399"/>
<rect x="170.70" y="793.40" width="8.6" height="59.10" fill="#54B399"/>
<rect x="180.94" y="813.10" width="8.6" height="39.40" fill="#54B399"/>
<rect x="191.18" y="813.10" width="8.6" height="39.40" fill="#54B399"/>
<rect x="201.42" y="832.80" width="8.6" height="19.70" fill="#54B399"/>
<rect x="211.66" y="793.40" width="8.6" height="59.10" fill="#54B399"/>
<rect x="221.90" y="813.10" width="8.6" height="39.40" fill="#54B399"/>
<rect x="232.14" y="714.60" width="8.6" height="137.90" fill="#54B399"/>
<rect x="242.38" y="813.10" width="8.6" height="39.40" fill="#54B399"/>
<rect x="252.62" y="773.70" width="8.6" height="78.80" fill="#54B399"/>
<rect x="262.86" y="754.00" width="8.6" height="98.50" fill="#54B399"/>
<rect x="273.10" y="793.40" width="8.6" height="59.10" fill="#54B399"/>
<rect x="283.34" y="793.40" width="8.6" height="59.10" fill="#54B399"/>
<rect x="293.58" y="813.10" width="8.6" height="39.40" fill="#54B399"/>
<rect x="303.82" y="773.70" width="8.6" height="78.80" fill="#54B399"/>
<rect x="324.30" y="832.80" width="8.6" height="19.70" fill="#54B399"/>
<rect x="334.54" y="754.00" width="8.6" height="98.50" fill="#54B399"/>
<rect x="344.78" y="773.70" width="8.6" height="78.80" fill="#54B399"/>
<rect x="355.02" y="773.70" width="8.6" height="78.80" fill="#54B399"/>
<rect x="375.50" y="773.70" width="8.6" height="78.80" fill="#54B399"/>
<rect x="385.74" y="773.70" width="8.6" height="78.80" fill="#54B399"/>
<rect x="406.22" y="714.60" width="8.6" height="137.90" fill="#54B399"/>
<rect x="416.46" y="813.10" width="8.6" height="39.40" fill="#54B399"/>
<rect x="426.70" y="793.40" width="8.6" height="59.10" fill="#54B399"/>
<rect x="436.94" y="754.00" width="8.6" height="98.50" fill="#54B399"/>
<rect x="447.18" y="754.00" width="8.6" height="98.50" fill="#54B399"/>
<rect x="457.42" y="813.10" width="8.6" height="39.40" fill="#54B399"/>
<rect x="467.66" y="714.60" width="8.6" height="137.90" fill="#54B399"/>
<rect x="477.90" y="773.70" width="8.6" height="78.80" fill="#54B399"/>
<rect x="488.14" y="832.80" width="8.6" height="19.70" fill="#54B399"/>
<rect x="498.38" y="754.00" width="8.6" height="98.50" fill="#54B399"/>
<rect x="508.62" y="832.80" width="8.6" height="19.70" fill="#54B399"/>
<rect x="518.86" y="793.40" width="8.6" height="59.10" fill="#54B399"/>
<rect x="529.10" y="813.10" width="8.6" height="39.40" fill="#54B399"/>
<rect x="539.34" y="734.30" width="8.6" height="118.20" fill="#54B399"/>
<rect x="549.58" y="793.40" width="8.6" height="59.10" fill="#54B399"/>
<rect x="559.82" y="832.80" width="8.6" height="19.70" fill="#54B399"/>
<rect x="570.06" y="793.40" width="8.6" height="59.10" fill="#54B399"/>
<rect x="580.30" y="793.40" width="8.6" height="59.10" fill="#54B399"/>
<rect x="600.78" y="793.40" width="8.6" height="59.10" fill="#54B399"/>
<rect x="621.26" y="734.30" width="8.6" height="118.20" fill="#54B399"/>
<rect x="641.74" y="793.40" width="8.6" height="59.10" fill="#54B399"/>
<rect x="651.98" y="734.30" width="8.6" height="118.20" fill="#54B399"/>
<rect x="662.22" y="773.70" width="8.6" height="78.80" fill="#54B399"/>
<rect x="672.46" y="813.10" width="8.6" height="39.40" fill="#54B399"/>
</svg>
</body></html>
